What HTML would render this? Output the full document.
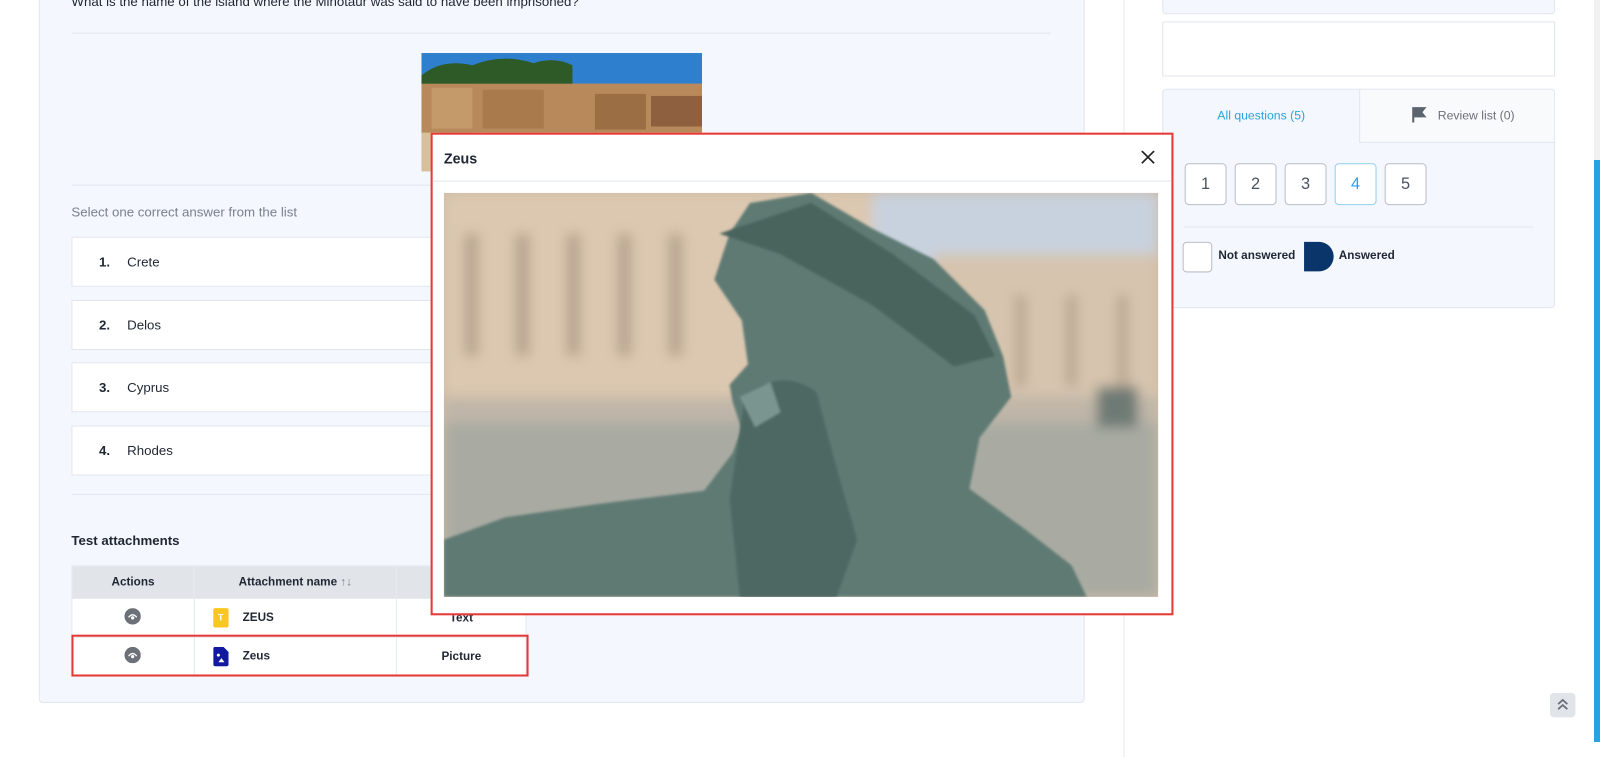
<!DOCTYPE html>
<html><head><meta charset="utf-8"><style>
*{box-sizing:border-box;margin:0;padding:0}
body{width:1600px;height:742px;overflow:hidden;background:#fff;font-family:"Liberation Sans",sans-serif;color:#1f2733;position:relative}
#w{position:absolute;left:0;top:0;width:1568px;height:727px;transform:scale(1.0204);transform-origin:0 0}
.abs{position:absolute}
.card{left:38px;top:-10px;width:1025px;height:699px;background:#f4f7fd;border:1px solid #e1e6ee;border-radius:4px}
.hline{height:1px;background:#e1e6ee}
.ans{left:70px;width:960px;height:49px;background:#fff;border:1px solid #e1e6ee;font-size:13px;line-height:47px;padding-left:26px}
.ans b{font-weight:bold;display:inline-block;width:24px}
table{border-collapse:collapse;font-size:11.5px}
td,th{border:1px solid #e6eaf0;text-align:center}
th{background:#e1e5ea;font-weight:bold;height:32px;color:#1f2733}
td{background:#fff;height:38px;font-weight:bold}
.nb{position:absolute;top:160px;width:41px;height:41px;border:1px solid #b9bec6;border-radius:4px;background:#fff;font-size:16px;color:#4a5361;text-align:center;line-height:39px}
</style></head><body><div id="w">
<div class="abs card"></div>
<div class="abs" style="left:70px;top:-6px;font-size:13px;color:#1f2733">What is the name of the island where the Minotaur was said to have been imprisoned?</div>
<div class="abs hline" style="left:70px;top:32px;width:960px"></div>
<svg class="abs" style="left:413px;top:52px" width="275" height="116" viewBox="0 0 275 116">
<rect width="275" height="116" fill="#c9a57a"/>
<rect width="275" height="30" fill="#2f7fcf"/>
<path d="M0 22 Q20 5 50 12 Q80 0 110 10 Q130 3 148 12 L148 40 L0 40Z" fill="#2e5a28"/>
<rect x="0" y="30" width="275" height="70" fill="#b8895a"/>
<rect x="10" y="34" width="40" height="40" fill="#c49a6a"/><rect x="60" y="36" width="60" height="38" fill="#a87a4c"/><rect x="170" y="40" width="50" height="35" fill="#9c6e44"/><rect x="225" y="42" width="50" height="30" fill="#8e6040"/>
<rect x="0" y="78" width="275" height="38" fill="#d8c09a"/>
</svg>
<div class="abs hline" style="left:70px;top:181px;width:960px"></div>
<div class="abs" style="left:70px;top:200px;font-size:13px;color:#7a818b">Select one correct answer from the list</div>
<div class="abs ans" style="top:232px"><b>1.</b> Crete</div>
<div class="abs ans" style="top:294px"><b>2.</b> Delos</div>
<div class="abs ans" style="top:355px"><b>3.</b> Cyprus</div>
<div class="abs ans" style="top:417px"><b>4.</b> Rhodes</div>
<div class="abs hline" style="left:70px;top:484px;width:960px"></div>
<div class="abs" style="left:70px;top:522px;font-size:13px;font-weight:bold">Test attachments</div>
<table class="abs" style="left:70px;top:554px;width:446px">
<tr><th style="width:120px">Actions</th><th style="width:199px">Attachment name <span style="color:#7a818b;font-weight:normal">↑↓</span></th><th style="width:127px">Type</th></tr>
<tr><td><svg width="16" height="16"><circle cx="8" cy="8" r="8" fill="#6b7079"/><path d="M4 9 Q8 4 12 9" stroke="#fff" fill="none" stroke-width="1.3"/><circle cx="8" cy="9.5" r="1.6" fill="#fff"/></svg></td><td style="text-align:left;padding-left:18px"><span style="display:inline-block;width:15px;height:19px;background:#f9c623;border-radius:2px;vertical-align:middle;margin-right:14px;color:#fff;font-size:9px;text-align:center;line-height:19px">T</span>ZEUS</td><td>Text</td></tr>
<tr><td><svg width="16" height="16"><circle cx="8" cy="8" r="8" fill="#6b7079"/><path d="M4 9 Q8 4 12 9" stroke="#fff" fill="none" stroke-width="1.3"/><circle cx="8" cy="9.5" r="1.6" fill="#fff"/></svg></td><td style="text-align:left;padding-left:18px"><svg width="15" height="19" style="vertical-align:middle;margin-right:14px"><path d="M0 2 Q0 0 2 0 H10 L15 5 V17 Q15 19 13 19 H2 Q0 19 0 17Z" fill="#1219a0"/><circle cx="5" cy="8" r="1.5" fill="#fff"/><path d="M5 15 L8 11 L11 15Z" fill="#fff"/></svg>Zeus</td><td>Picture</td></tr>
</table>
<div class="abs" style="left:70px;top:622px;width:448px;height:41px;border:2px solid #e53935"></div>

<div class="abs" style="left:1101px;top:0;width:1px;height:742px;background:#e6eaf0"></div>
<div class="abs" style="left:1139px;top:-10px;width:385px;height:24px;background:#f4f7fd;border:1px solid #e1e6ee;border-radius:4px"></div>
<div class="abs" style="left:1139px;top:21px;width:385px;height:54px;background:#fff;border:1px solid #e1e6ee"></div>
<div class="abs" style="left:1139px;top:87px;width:385px;height:215px;background:#f4f7fd;border:1px solid #e1e6ee;border-radius:4px;overflow:hidden">
<div class="abs" style="left:0;top:0;width:192px;height:52px;font-size:12px;color:#29a3e0;text-align:center;line-height:50px">All questions (5)</div>
<div class="abs" style="left:192px;top:0;width:193px;height:52px;background:#f9fafc;border-left:1px solid #e1e6ee;border-bottom:1px solid #e1e6ee;font-size:12px;color:#6b7079;line-height:50px;padding-left:50px"><svg width="16" height="16" style="vertical-align:-3px;margin-right:10px"><path d="M1 1 H15 L11 6 L15 11 H3 V16 H1Z" fill="#5c6470"/></svg>Review list (0)</div>
</div>
<div class="nb" style="left:1161px">1</div><div class="nb" style="left:1210px">2</div><div class="nb" style="left:1259px">3</div><div class="nb" style="left:1308px;border-color:#8fd0f0;color:#29a3e0">4</div><div class="nb" style="left:1357px">5</div>
<div class="abs hline" style="left:1160px;top:222px;width:342px"></div>
<div class="abs" style="left:1159px;top:237px;width:29px;height:30px;border:1px solid #b9bec6;border-radius:4px;background:#fff"></div>
<div class="abs" style="left:1194px;top:245px;font-size:11.5px;font-weight:bold">Not answered</div>
<div class="abs" style="left:1278px;top:237px;width:29px;height:29px;background:#0a356b;border-radius:0 15px 15px 0"></div>
<div class="abs" style="left:1312px;top:245px;font-size:11.5px;font-weight:bold">Answered</div>
<div class="abs" style="left:1519px;top:679px;width:25px;height:24px;background:#e1e5ea;border-radius:4px"><svg width="25" height="24"><path d="M8 11 L12.5 7 L17 11 M8 16 L12.5 12 L17 16" stroke="#6b7079" stroke-width="1.8" fill="none"/></svg></div>

<div class="abs" style="left:422px;top:130px;width:728px;height:473px;background:#fff;border:2px solid #e53935">
<div class="abs" style="left:11px;top:15px;font-size:14px;font-weight:bold">Zeus</div>
<svg class="abs" style="left:693px;top:14px" width="16" height="16"><path d="M2 2 L14 14 M14 2 L2 14" stroke="#222" stroke-width="1.6"/></svg>
<div class="abs hline" style="left:0;top:45px;width:724px"></div>
<svg class="abs" style="left:11px;top:57px" width="700" height="396" viewBox="0 0 700 396">
<defs><filter id="b"><feGaussianBlur stdDeviation="6"/></filter><filter id="s"><feGaussianBlur stdDeviation="1.2"/></filter></defs>
<rect width="700" height="396" fill="#cdbba6"/>
<g filter="url(#b)">
<rect x="400" y="0" width="300" height="80" fill="#c8d2de"/>
<rect x="0" y="0" width="420" height="200" fill="#dcc8b0"/>
<rect x="480" y="60" width="220" height="140" fill="#d6c4ae"/>
<g fill="#b8a48e"><rect x="20" y="40" width="14" height="120"/><rect x="70" y="40" width="14" height="120"/><rect x="120" y="40" width="14" height="120"/><rect x="170" y="40" width="14" height="120"/><rect x="220" y="40" width="14" height="120"/><rect x="560" y="100" width="10" height="90"/><rect x="610" y="100" width="10" height="90"/><rect x="660" y="100" width="10" height="90"/></g>
<rect x="0" y="200" width="700" height="30" fill="#bfb6a8"/>
<rect x="0" y="225" width="700" height="171" fill="#a9aba2"/>
<rect x="640" y="190" width="40" height="40" fill="#6e7a74"/>
</g>
<path filter="url(#s)" d="M300 10 L360 0 L420 35 L480 65 L530 115 L548 160 L556 200 L525 240 L515 290 L570 330 L615 365 L630 396 L0 396 L0 340 L60 318 L150 305 L255 292 L283 255 L292 232 L283 205 L280 188 L298 168 L292 125 L265 85 L280 40Z" fill="#5f7a73"/>
<path filter="url(#s)" d="M295 200 Q330 170 365 195 L385 270 L405 340 L385 396 L290 396 L280 300Z" fill="#4e6862"/>
<path filter="url(#s)" d="M270 40 L360 10 L440 60 L520 120 L540 160 L500 170 L420 110 L330 60Z" fill="#4a635d"/>
<path filter="url(#s)" d="M290 200 L320 185 L330 215 L305 230Z" fill="#7a9590"/>
</svg>
</div>
</div>
<div class="abs" style="left:1594px;top:0;width:6px;height:742px;background:#f1f1f1"></div>
<div class="abs" style="left:1594px;top:160px;width:6px;height:582px;background:#29a3e0"></div>
</body></html>
